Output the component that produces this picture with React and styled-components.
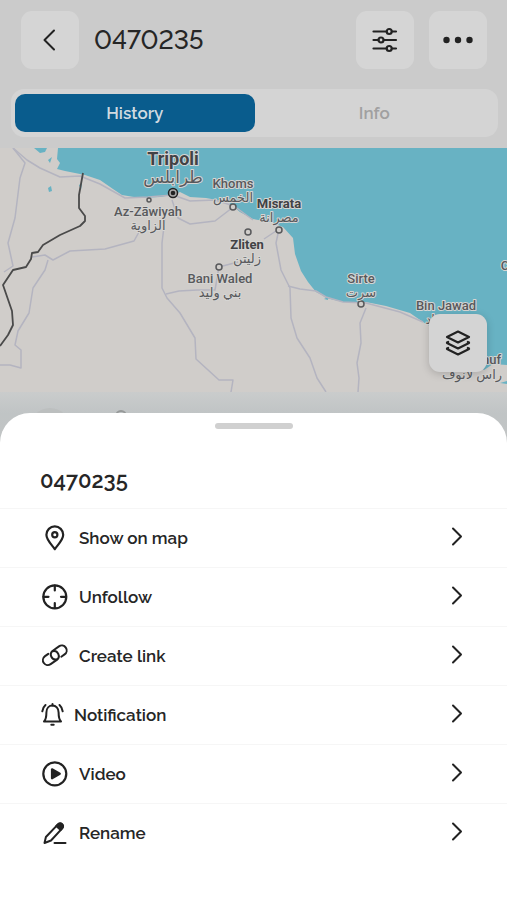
import React, { useState } from "react";
import styled, { createGlobalStyle } from "styled-components";

const GlobalStyle = createGlobalStyle`
  * {
    box-sizing: border-box;
  }
  body {
    margin: 0;
    background: #cbcbcb;
    font-family: Raleway, Lato, sans-serif;
    color: #262626;
  }
  button {
    font: inherit;
    color: inherit;
    border: none;
    cursor: pointer;
  }
`;

const Page = styled.div`
  min-height: 100vh;
  display: flex;
  flex-direction: column;
`;

const Header = styled.header`
  display: flex;
  align-items: center;
  gap: 15px;
  padding: 11px 20px 20px 21px;
`;

const Title = styled.h1`
  flex: 1;
  margin: 0;
  font-size: 26px;
  line-height: 32px;
  font-weight: 500;
  font-variant-numeric: lining-nums;
`;

const SquareButton = styled.button`
  width: 58px;
  height: 58px;
  padding: 0;
  display: flex;
  align-items: center;
  justify-content: center;
  background: #d5d5d5;
  border-radius: 11px;
`;

const Tabs = styled.div`
  display: flex;
  margin: 0 9px 11px 11px;
  padding: 5px 4px;
  background: #d4d4d4;
  border-radius: 13px;
`;

const Tab = styled.button`
  flex: 1;
  height: 38px;
  padding: 0;
  border-radius: 10px;
  font-size: 17px;
  line-height: 24px;
  font-weight: 600;
  background: ${({ $active }) => ($active ? "#095c8d" : "transparent")};
  color: ${({ $active }) => ($active ? "#d0dae0" : "#a0a0a0")};
`;

const MapArea = styled.section`
  position: relative;
  height: 244px;
  background: #d0cdca;
`;

const MapSvg = styled.svg`
  display: block;
  width: 100%;
  height: 100%;
`;

const Place = styled.text`
  font-family: Roboto, "DejaVu Sans", sans-serif;
  font-size: ${({ $size }) => $size || 13}px;
  font-weight: ${({ $bold }) => ($bold ? 700 : 500)};
  fill: ${({ $bold }) => ($bold ? "#414245" : "#58595c")};
  text-anchor: middle;
  paint-order: stroke;
  stroke: #d6d5d3;
  stroke-width: 2px;
  stroke-linejoin: round;
`;

const LayersButton = styled(SquareButton)`
  position: absolute;
  right: 20px;
  bottom: 20px;
  background: #d4d4d4;
  box-shadow: 0 2px 8px rgba(0, 0, 0, 0.18);
`;

const Peek = styled.div`
  height: 61px;
  background: linear-gradient(#cacccc, #c0c4c5 21px, #c2c4c4);
`;

const PeekSvg = styled.svg`
  display: block;
  margin-left: 32px;
`;

const Sheet = styled.section`
  position: relative;
  flex: 1;
  margin-top: -40px;
  padding-bottom: 38px;
  background: #fff;
  border-radius: 30px 30px 0 0;
`;

const Handle = styled.div`
  width: 78px;
  height: 6px;
  margin: 10px auto 35px;
  border-radius: 3px;
  background: #d0d0d0;
`;

const SheetTitle = styled.h2`
  margin: 0;
  padding: 0 40px 12px;
  font-size: 22px;
  line-height: 32px;
  font-weight: 600;
`;

const Menu = styled.ul`
  margin: 0;
  padding: 0;
  list-style: none;
`;

const MenuItem = styled.li`
  border-top: 1px solid #f6f6f6;
`;

const MenuButton = styled.button`
  width: 100%;
  height: 58px;
  display: flex;
  align-items: center;
  gap: 10px;
  padding: 0 44px 0 41px;
  background: none;
  text-align: left;
`;

const MenuLabel = styled.span`
  flex: 1;
  font-size: 17px;
  line-height: 24px;
  font-weight: 600;
`;

const Icon = ({ width = 28, height = 28, stroke = 2, children }) => (
  <svg
    width={width}
    height={height}
    viewBox={`0 0 ${width} ${height}`}
    fill="none"
    stroke="#222"
    strokeWidth={stroke}
    strokeLinecap="round"
    strokeLinejoin="round"
    aria-hidden="true"
  >
    {children}
  </svg>
);

const BackIcon = () => (
  <Icon width={24} height={24}>
    <path d="M16 2.500 6.500 12l9.500 9.500" />
  </Icon>
);

const SlidersIcon = () => (
  <Icon width={28} height={28} stroke={2.2}>
    <path d="M2.500 5.500h13M21 5.500h4M2.500 14h5M13 14h12M2.500 22.500h13M21 22.500h4" />
    <circle cx="18.200" cy="5.500" r="2.500" />
    <circle cx="10" cy="14" r="2.500" />
    <circle cx="18.200" cy="22.500" r="2.500" />
  </Icon>
);

const DotsIcon = () => (
  <Icon width={30} height={8}>
    <g fill="#222" stroke="none">
      <circle cx="3.500" cy="4" r="3.200" />
      <circle cx="15" cy="4" r="3.200" />
      <circle cx="26.500" cy="4" r="3.200" />
    </g>
  </Icon>
);

const LayersIcon = () => (
  <Icon width={28} height={28} stroke={2.2}>
    <path d="m14 2.500 11 5.500L14 13.500 3 8z" />
    <path d="M3 14l11 5.500L25 14M3 13.500l1.200-.6M25 13.500l-1.200-.6" />
    <path d="M3 20l11 5.500L25 20M3 19.500l1.200-.6M25 19.500l-1.200-.6" />
  </Icon>
);

const PinIcon = () => (
  <Icon stroke={2.2}>
    <path d="M13.800 25.200C11.500 21.500 5.400 16.200 5.400 10.800a8.400 8.400 0 0 1 16.800 0c0 5.400-6.100 10.700-8.400 14.400z" />
    <circle cx="13.800" cy="10.800" r="2.600" />
  </Icon>
);

const TargetIcon = () => (
  <Icon stroke={2.2}>
    <circle cx="13.800" cy="13.800" r="11.500" />
    <path d="M13.800 2.500v5M13.800 20v5M2.500 13.800h5M20 13.800h5" />
  </Icon>
);

const LinkIcon = () => (
  <Icon>
    <g transform="translate(13.8 13.3) rotate(-35)">
      <path d="M-.5 4.600A4.900 4.900 0 0 1 1-4.900H8.500a4.900 4.900 0 0 1 0 9.800H4.500" />
      <path d="M.5-4.600A4.900 4.900 0 0 1-1 4.900h-7.500a4.900 4.900 0 0 1 0-9.800h4" />
    </g>
  </Icon>
);

const BellIcon = () => (
  <Icon width={23}>
    <path d="M3 20.500h17c-2-2.100-2.400-3.900-2.400-9.100 0-4.200-2.700-6.900-6.100-6.900s-6.100 2.700-6.100 6.900c0 5.200-.4 7-2.400 9.100z" />
    <path d="M11.500 3v1.500M10.300 23.800h2.400M4.500 4C2.600 5.700 1.500 7.700 1.300 10.300M18.500 4c1.900 1.700 3 3.700 3.200 6.300" />
  </Icon>
);

const PlayIcon = () => (
  <Icon stroke={2.2}>
    <circle cx="13.800" cy="13.800" r="11.500" />
    <path d="M11 9.300v9l7.800-4.500z" fill="#222" />
  </Icon>
);

const PencilIcon = () => (
  <Icon>
    <path d="m3.500 24 1.400-6L16.700 5.600c2.600-2.800 6.900.7 4.500 3.800L10 21.500z" />
    <path d="m15.300 7 2.400-2.300c2.500-1.600 5.500 1.500 3.800 3.900L19.700 11z" fill="#222" />
    <path d="M13.500 24h11" />
  </Icon>
);

const ChevronIcon = () => (
  <Icon width={12} height={22}>
    <path d="m2 1.500 8 8-8 8" />
  </Icon>
);

const places = [
  { name: "Tripoli", arabic: "طرابلس", x: 173, y: 17, ay: 35, size: 18, arabicSize: 17, bold: true },
  { name: "Khoms", arabic: "الخمس", x: 233, y: 40, ay: 54 },
  { name: "Misrata", arabic: "مصرانة", x: 279, y: 60, ay: 74, bold: true },
  { name: "Az-Zāwiyah", arabic: "الزاوية", x: 148, y: 68, ay: 82 },
  { name: "Zliten", arabic: "زليتن", x: 247, y: 101, ay: 115, bold: true },
  { name: "Bani Waled", arabic: "بني وليد", x: 220, y: 135, ay: 149 },
  { name: "Sirte", arabic: "سرت", x: 361, y: 135, ay: 149 },
  { name: "Bin Jawad", arabic: "بن جواد", x: 446, y: 162, ay: 176 },
  { name: "Ras Lanuf", arabic: "راس لانوف", x: 472, y: 216, ay: 231 },
];

const markers = [
  [149, 52, 2],
  [233, 59, 3],
  [279, 82, 3],
  [248, 84, 3],
  [219, 119, 3],
  [361, 156, 3],
];

const roads = [
  "M13 0 25 15 20 30 15 70 8 95 13 118 4 124",
  "M13 0 27 12 40 20 60 29 80 28 100 36 125 50 148 49 173 47 190 53 215 52 234 58 253 72",
  "M139 84 134 93 105 101 70 103 53 112 45 107 32 109",
  "M48 112 45 122 33 140 29 165 18 183 15 197 21 202 21 220 10 217 0 217",
  "M165 70 162 95 162 140 167 150 180 165 195 190 196 211 219 232 233 232 231 244",
  "M172 52 178 70 190 76 215 73 232 60",
  "M166 146 179 143 197 142 215 142 219 119 238 114",
  "M264 91 279 81 276 95 281 122 290 140 291 170 297 190 310 210 317 230 326 244",
  "M288 138 300 141 316 143 326 149 343 154 366 155 400 164 423 174",
  "M366 160 360 175 361 195 357 215 359 230 358 244",
];

const CoastMap = () => (
  <MapSvg viewBox="0 0 507 244" preserveAspectRatio="xMidYMid slice" role="img" aria-label="Map">
    <rect width="507" height="244" fill="#d0cdca" />
    <g fill="#68b2c3">
      <path d="M58 0H507V217L493 216 484 222 468 210 450 190 423 174 410 165 386 158 366 154 343 154 326 150 322 147 316 144 308 134 301 123 295 106 293 90 283 79 270 74 253 71 240 64 228 54 206 50 190 49 180 44 172 47 160 49 140 50 122 47 113 41 100 32 85 27 65 23 57 21 60 15 57 11z" />
      <path d="M34 0h13l-2 4-5 1zM48 12l4-3-2 6zM48 40l3-2 1 5-3 1zM79 37l3-2-1 7zM324 151l4-2v3zM500 235l7-2v3z" />
    </g>
    <g fill="none" stroke="#b4b4c0" strokeWidth="1.500" strokeLinejoin="round">
      {roads.map((d) => (
        <path key={d} d={d} />
      ))}
    </g>
    <path
      d="M83 25 79 47 79 60 85 68 85 73 80 78 60 87 43 97 38 104 32 105 31 111 26 119 13 122 3 137 12 163 13 177 8 187 0 198"
      fill="none"
      stroke="#4a4a4a"
      strokeWidth="1.800"
      strokeLinejoin="round"
    />
    <g fill="#d0cdca" stroke="#58595b" strokeWidth="1.500">
      {markers.map(([x, y, r]) => (
        <circle key={x} cx={x} cy={y} r={r} />
      ))}
    </g>
    <circle cx="173" cy="45" r="4.500" fill="#aaa" stroke="#222" strokeWidth="1.500" />
    <circle cx="173" cy="45" r="2.300" fill="#222" />
    {places.map((place) => (
      <g key={place.name}>
        <Place x={place.x} y={place.y} $size={place.size} $bold={place.bold}>
          {place.name}
        </Place>
        <Place x={place.x} y={place.ay} $size={place.arabicSize}>
          {place.arabic}
        </Place>
      </g>
    ))}
    <Place x="505" y="122">C</Place>
  </MapSvg>
);

const menuItems = [
  { label: "Show on map", icon: PinIcon },
  { label: "Unfollow", icon: TargetIcon },
  { label: "Create link", icon: LinkIcon },
  { label: "Notification", icon: BellIcon },
  { label: "Video", icon: PlayIcon },
  { label: "Rename", icon: PencilIcon },
];

const App = () => {
  const [tab, setTab] = useState("History");

  return (
    <Page>
      <GlobalStyle />
      <Header>
        <SquareButton type="button" aria-label="Back">
          <BackIcon />
        </SquareButton>
        <Title>0470235</Title>
        <SquareButton type="button" aria-label="Filters">
          <SlidersIcon />
        </SquareButton>
        <SquareButton type="button" aria-label="More">
          <DotsIcon />
        </SquareButton>
      </Header>
      <Tabs role="tablist">
        {["History", "Info"].map((name) => (
          <Tab
            key={name}
            type="button"
            role="tab"
            aria-selected={tab === name}
            $active={tab === name}
            onClick={() => setTab(name)}
          >
            {name}
          </Tab>
        ))}
      </Tabs>
      <MapArea>
        <CoastMap />
        <LayersButton type="button" aria-label="Map layers">
          <LayersIcon />
        </LayersButton>
      </MapArea>
      <Peek>
        <PeekSvg width="100" height="40" aria-hidden="true">
          <circle cx="18" cy="36" r="20" fill="#bcbfbf" />
          <circle cx="89" cy="24" r="5" fill="none" stroke="#969999" strokeWidth="2" />
        </PeekSvg>
      </Peek>
      <Sheet aria-labelledby="sheet-title">
        <Handle />
        <SheetTitle id="sheet-title">0470235</SheetTitle>
        <Menu>
          {menuItems.map(({ label, icon: ItemIcon }) => (
            <MenuItem key={label}>
              <MenuButton type="button">
                <ItemIcon />
                <MenuLabel>{label}</MenuLabel>
                <ChevronIcon />
              </MenuButton>
            </MenuItem>
          ))}
        </Menu>
      </Sheet>
    </Page>
  );
};

export default App;
